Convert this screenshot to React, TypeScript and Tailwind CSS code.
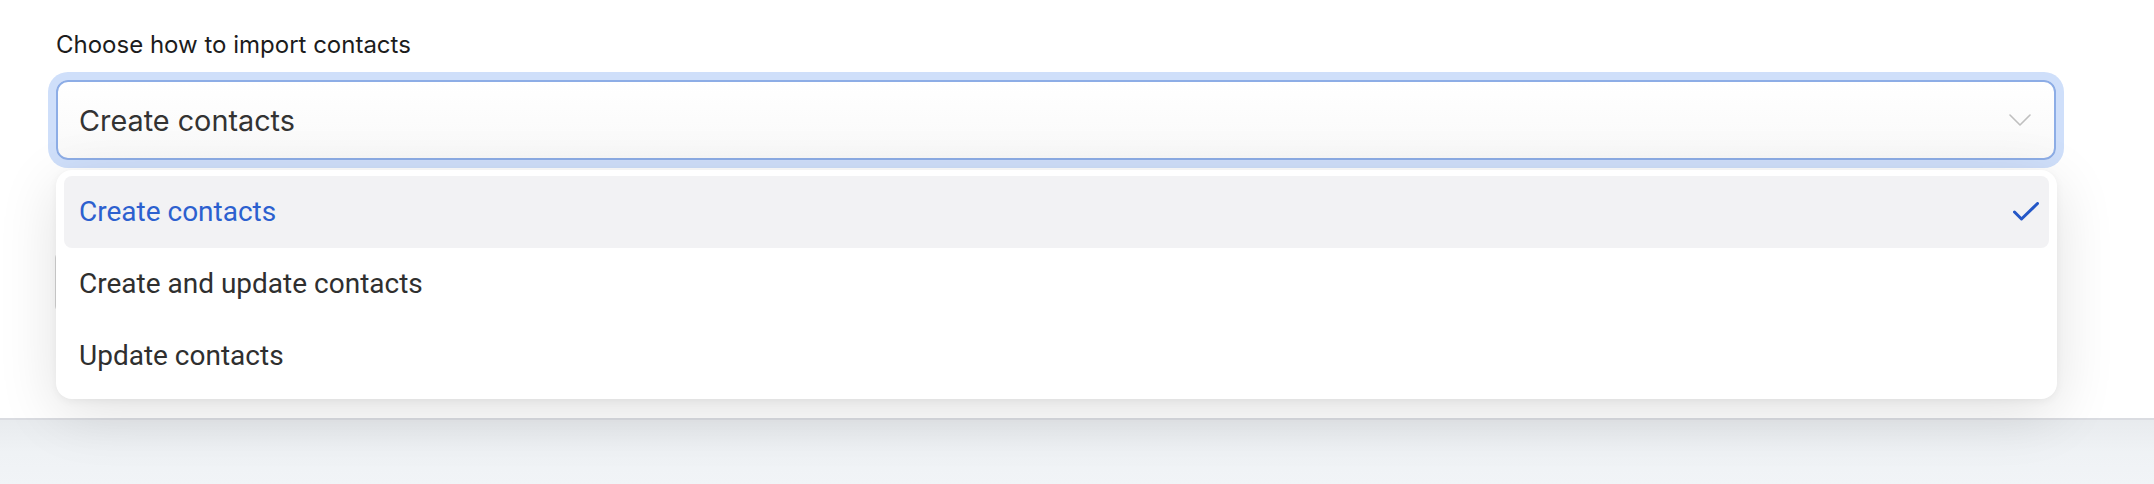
import React from 'react';

const OPTIONS = ['Create contacts', 'Create and update contacts', 'Update contacts'];

const ChevronDown: React.FC = () => (
  <svg width="22" height="12" viewBox="0 0 22 12" fill="none">
    <path d="M1 1L11 11L21 1" stroke="#bfbfbf" strokeWidth="1.6" strokeLinecap="round" strokeLinejoin="round" />
  </svg>
);

const Check: React.FC = () => (
  <svg width="26" height="20" viewBox="0 0 26 20" fill="none">
    <path d="M1.5 10L8.5 17L24.5 1.5" stroke="#2457c7" strokeWidth="3" strokeLinecap="round" strokeLinejoin="round" />
  </svg>
);

const App: React.FC = () => {
  const selected = 0;

  return (
    <div className="w-[2154px] h-[484px] overflow-hidden flex flex-col bg-white">
      <div className="relative h-[420px] shrink-0 border-b-2 border-[#dadce1] bg-white pl-[56px] pt-[29px]">
        <label className="block font-['Inter',sans-serif] text-[24px] leading-[32px] text-[#1c1c1c]">
          Choose how to import contacts
        </label>

        <div className="relative mt-[19px] w-[2000px]">
          {/* select box */}
          <div className="h-[80px] rounded-[12px] border-2 border-[#8dade6] ring-8 ring-[#cfdffa] bg-gradient-to-b from-white to-[#f9f9f9] flex items-center justify-between pl-[21px] pr-[23px]">
            <span className="pt-[2px] font-['Inter',sans-serif] text-[28.8px] leading-[36px] text-[#333333]">
              Create contacts
            </span>
            <ChevronDown />
          </div>

          {/* something on the page beneath the open menu */}
          <div className="mt-[92px] -ml-px h-[60px] w-[320px] rounded-[6px] border border-[#d6d6d6]" />

          {/* dropdown menu */}
          <div className="absolute left-0 top-[90px] z-10 w-[2001px] rounded-[16px] bg-white pt-[6px] pb-[7px] px-[8px] shadow-[0_14px_60px_rgba(0,0,0,0.12),0_2px_8px_rgba(0,0,0,0.05)]">
            {OPTIONS.map((option, idx) => (
              <div
                key={option}
                className={
                  idx === selected
                    ? 'h-[72px] rounded-[8px] bg-[#f2f2f4] flex items-center justify-between pl-[15px] pr-[10px]'
                    : 'h-[72px] rounded-[8px] flex items-center justify-between pl-[15px] pr-[10px]'
                }
              >
                <span
                  className={
                    idx === selected
                      ? "font-['Roboto',sans-serif] text-[28px] text-[#2c60cf]"
                      : "font-['Roboto',sans-serif] text-[28px] text-[#2f2f2f]"
                  }
                >
                  {option}
                </span>
                {idx === selected && <Check />}
              </div>
            ))}
          </div>
        </div>
      </div>
      <div className="flex-1 bg-gradient-to-b from-[#e8ebee] via-[#eff2f5] to-[#f1f4f7]" />
    </div>
  );
};

export default App;
